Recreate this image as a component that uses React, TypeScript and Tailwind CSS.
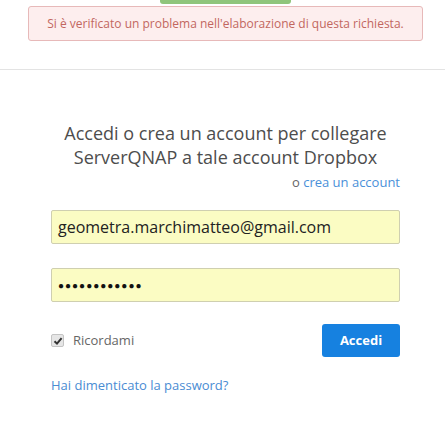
import React, { useState } from 'react';

const font = { fontFamily: '"Open Sans", "Noto Sans", sans-serif' };

export default function App() {
  const [remember, setRemember] = useState(true);

  return (
    <div className="w-[445px] h-[436px] bg-white overflow-hidden" style={font}>
      {/* top banner */}
      <div className="pl-[6px] flex flex-col items-center">
        <div className="w-[131px] h-[4px] bg-[#8fc57b] rounded-b-[3px]" />
        <div className="mt-[2px] w-[395px] h-[35px] flex items-center justify-center bg-[#fdeeee] border border-[#e7b9b9] rounded-[3px] text-[12px] text-[#c2675f]">
          Si è verificato un problema nell'elaborazione di questa richiesta.
        </div>
      </div>

      <div className="mt-[28px] border-t border-[#e3e3e3]" />

      <div className="pl-[6px]">
        <div className="w-[349px] mx-auto">
          <h1 className="mt-[51px] text-center text-[18px] leading-[24px] text-[#4d4d4d]">
            Accedi o crea un account per collegare ServerQNAP a tale account Dropbox
          </h1>
          <div className="mt-[5px] text-right text-[13px] leading-[16px] text-[#666]">
            o <a className="text-[#4a90d9]">crea un account</a>
          </div>

          <div className="mt-[20px] flex flex-col gap-[24px]">
            <div className="h-[34px] flex items-center px-[6px] bg-[#fbfcc3] border border-[#cfcfb0] rounded-[2px] text-[16px] text-[#222]">
              geometra.marchimatteo@gmail.com
            </div>
            <div className="h-[34px] flex items-center px-[6px] bg-[#fbfcc3] border border-[#cfcfb0] rounded-[2px] text-[10px] tracking-[1px] text-[#111]">
              ●●●●●●●●●●●●
            </div>
          </div>

          <div className="mt-[22px] flex items-center justify-between">
            <label className="flex items-center gap-[9px] text-[13px] text-[#666]">
              <span
                onClick={() => setRemember(!remember)}
                className="w-[13px] h-[13px] flex items-center justify-center bg-[#e6e6e6] border border-[#c4c4c4] rounded-[2px]"
              >
                {remember && (
                  <svg width="10" height="10" viewBox="0 0 10 10">
                    <path d="M1.5 5.2 L4 7.6 L8.6 2.2" fill="none" stroke="#333" strokeWidth="2" />
                  </svg>
                )}
              </span>
              Ricordami
            </label>
            <button className="w-[78px] h-[33px] bg-[#1681e0] rounded-[3px] text-white text-[13px] font-bold">
              Accedi
            </button>
          </div>

          <div className="mt-[19px] text-[13px] leading-[18px] text-[#4a8cd3]">Hai dimenticato la password?</div>
        </div>
      </div>
    </div>
  );
}
